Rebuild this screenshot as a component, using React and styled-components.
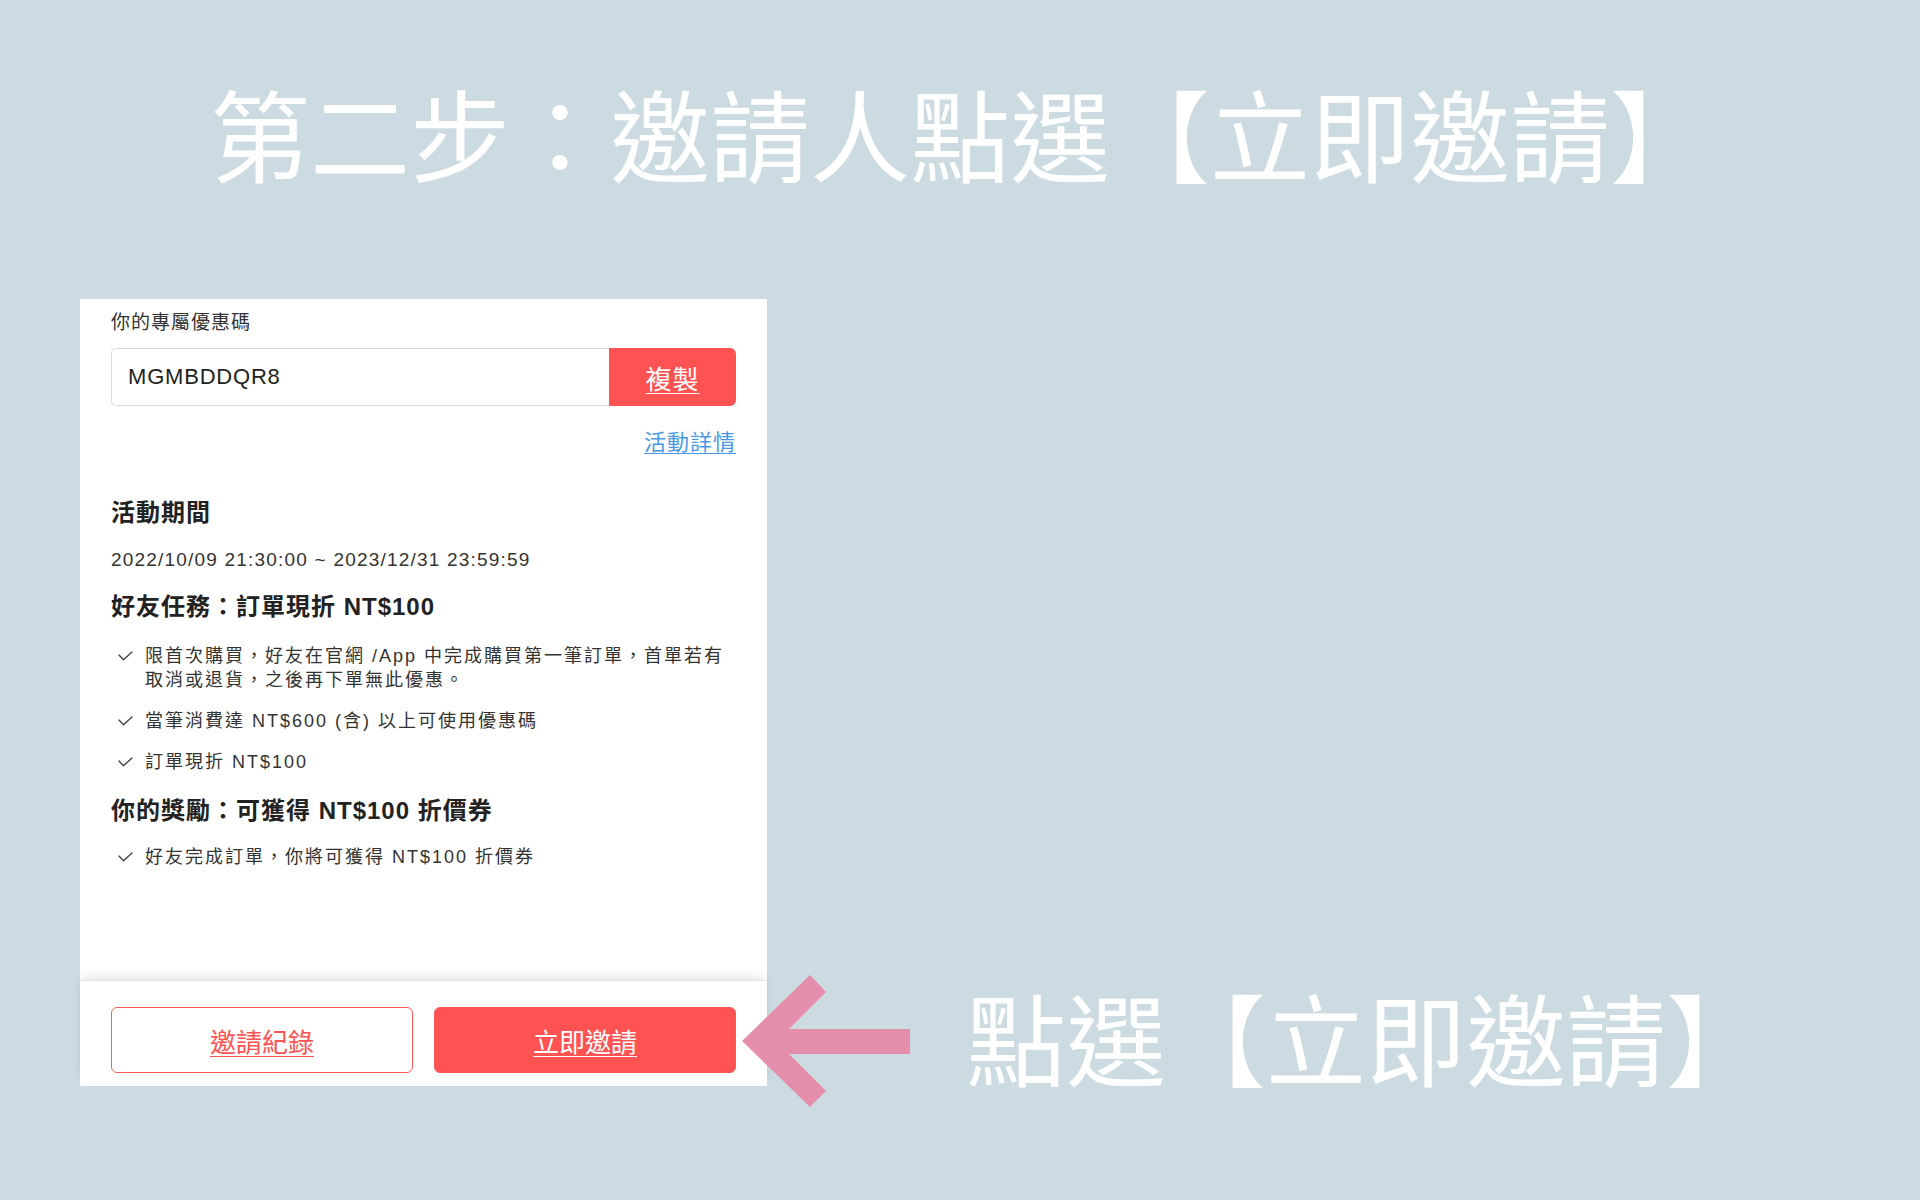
import React from "react";
import styled, { createGlobalStyle } from "styled-components";

const CJK = `"Noto Sans CJK TC", "Noto Sans CJK SC", sans-serif`;
const UI = `"Liberation Sans", "Noto Sans CJK TC", "Noto Sans CJK SC", sans-serif`;

const GlobalStyle = createGlobalStyle`
  html, body { margin: 0; padding: 0; }
  body { background: #ccdae1; }
  *, *::before, *::after { box-sizing: border-box; }
`;

const Page = styled.div`
  width: 1920px;
  height: 1200px;
  overflow: hidden;
  background: #ccdae1;
  display: flex;
  flex-direction: column;
  padding-top: 72px;
`;

const Headline = styled.h1`
  margin: 0;
  font-family: ${CJK};
  font-weight: 400;
  font-size: 100px;
  line-height: 120px;
  color: #ffffff;
  text-align: center;
`;

const Stage = styled.div`
  display: flex;
  align-items: flex-end;
  padding-left: 80px;
  margin-top: 107px;
`;

const Card = styled.section`
  width: 687px;
  height: 787px;
  background: #ffffff;
  display: flex;
  flex-direction: column;
  font-family: ${UI};
  color: #333;
`;

const Body = styled.div`
  display: flex;
  flex-direction: column;
  padding: 10px 31px 0;
`;

const FieldLabel = styled.div`
  font-size: 19px;
  letter-spacing: 1px;
  line-height: 28px;
  color: #333;
`;

const CodeRow = styled.div`
  display: flex;
  height: 58px;
  margin-top: 11px;
`;

const CodeBox = styled.div`
  flex: 1;
  display: flex;
  align-items: center;
  padding-left: 16px;
  border: 1px solid #dcdcdc;
  border-right: none;
  border-radius: 5px 0 0 5px;
  font-size: 22px;
  letter-spacing: 0.8px;
  color: #222;
`;

const CopyButton = styled.button`
  width: 127px;
  padding: 0;
  border: none;
  border-radius: 0 6px 6px 0;
  background: #ff5252;
  color: #fff;
  font-family: ${UI};
  font-size: 26px;
  letter-spacing: 1px;
  text-decoration: underline;
  text-underline-offset: 4px;
  text-decoration-thickness: 1px;
  cursor: pointer;
`;

const DetailRow = styled.div`
  margin-top: 22px;
  line-height: 30px;
  text-align: right;
`;

const DetailLink = styled.a`
  font-size: 22px;
  letter-spacing: 1px;
  color: #4a98e4;
  text-decoration: underline;
  text-underline-offset: 3px;
  text-decoration-thickness: 1px;
`;

const SectionTitle = styled.h2`
  margin: ${(p) => p.$gap}px 0 0;
  font-size: 24px;
  font-weight: 700;
  letter-spacing: 1px;
  line-height: 32px;
  color: #222;
`;

const Period = styled.div`
  margin-top: 17px;
  font-size: 19px;
  letter-spacing: 1.2px;
  line-height: 28px;
  color: #333;
`;

const CheckList = styled.ul`
  list-style: none;
  margin: ${(p) => p.$gap}px 0 0;
  padding: 0;
  display: flex;
  flex-direction: column;
  gap: 17px;
`;

const CheckItem = styled.li`
  display: flex;
  align-items: flex-start;
  gap: 12px;
  padding-left: 7px;
  font-size: 18px;
  letter-spacing: 2px;
  line-height: 24px;
  color: #333;
`;

const CheckMark = styled.svg`
  flex: none;
  width: 15px;
  height: 10px;
  margin-top: 7px;
`;

const ItemText = styled.span`
  flex: 1;
`;

const Footer = styled.div`
  margin-top: auto;
  display: flex;
  gap: 21px;
  padding: 26px 31px 13px;
  background: #fff;
  border-top: 1px solid #e4e4e4;
  box-shadow: 0 -5px 10px -3px rgba(0, 0, 0, 0.13);
`;

const ActionButton = styled.button`
  flex: 1;
  height: 66px;
  border-radius: 6px;
  border: 1.5px solid #ff5a5a;
  background: ${(p) => (p.$primary ? "#ff5252" : "#ffffff")};
  color: ${(p) => (p.$primary ? "#ffffff" : "#ff5252")};
  font-family: ${UI};
  font-size: 26px;
  text-decoration: underline;
  text-underline-offset: 4px;
  text-decoration-thickness: 1px;
  cursor: pointer;
`;

const Callout = styled.div`
  display: flex;
  align-items: center;
  gap: 56px;
  margin-left: -25px;
  margin-bottom: -21px;
`;

const ArrowIcon = styled.svg`
  flex: none;
  width: 168px;
  height: 132px;
`;

const CalloutText = styled.div`
  font-family: ${CJK};
  font-weight: 400;
  font-size: 100px;
  line-height: 120px;
  padding-bottom: 11px;
  color: #fff;
  white-space: nowrap;
`;

const Check = () => (
  <CheckMark viewBox="0 0 15 10">
    <polyline
      points="1,4 5.5,8.8 14,1"
      fill="none"
      stroke="#444"
      strokeWidth="1.4"
      strokeLinecap="round"
      strokeLinejoin="round"
    />
  </CheckMark>
);

const friendRules = [
  "限首次購買，好友在官網 /App 中完成購買第一筆訂單，首單若有取消或退貨，之後再下單無此優惠。",
  "當筆消費達 NT$600 (含) 以上可使用優惠碼",
  "訂單現折 NT$100",
];

const rewardRules = ["好友完成訂單，你將可獲得 NT$100 折價券"];

export default function App() {
  return (
    <>
      <GlobalStyle />
      <Page>
        <Headline>第二步：邀請人點選【立即邀請】</Headline>
        <Stage>
          <Card>
            <Body>
              <FieldLabel>你的專屬優惠碼</FieldLabel>
              <CodeRow>
                <CodeBox>MGMBDDQR8</CodeBox>
                <CopyButton>複製</CopyButton>
              </CodeRow>
              <DetailRow>
                <DetailLink>活動詳情</DetailLink>
              </DetailRow>
              <SectionTitle $gap={37}>活動期間</SectionTitle>
              <Period>2022/10/09 21:30:00 ~ 2023/12/31 23:59:59</Period>
              <SectionTitle $gap={17}>好友任務：訂單現折 NT$100</SectionTitle>
              <CheckList $gap={21}>
                {friendRules.map((t) => (
                  <CheckItem key={t}>
                    <Check />
                    <ItemText>{t}</ItemText>
                  </CheckItem>
                ))}
              </CheckList>
              <SectionTitle $gap={21}>你的獎勵：可獲得 NT$100 折價券</SectionTitle>
              <CheckList $gap={18}>
                {rewardRules.map((t) => (
                  <CheckItem key={t}>
                    <Check />
                    <ItemText>{t}</ItemText>
                  </CheckItem>
                ))}
              </CheckList>
            </Body>
            <Footer>
              <ActionButton>邀請紀錄</ActionButton>
              <ActionButton $primary>立即邀請</ActionButton>
            </Footer>
          </Card>
          <Callout>
            <ArrowIcon viewBox="0 0 168 132">
              <polygon
                points="0,66 68,0 84,17 47,54 168,54 168,79 47,79 84,116 68,132"
                fill="#e48eac"
              />
            </ArrowIcon>
            <CalloutText>點選【立即邀請】</CalloutText>
          </Callout>
        </Stage>
      </Page>
    </>
  );
}
